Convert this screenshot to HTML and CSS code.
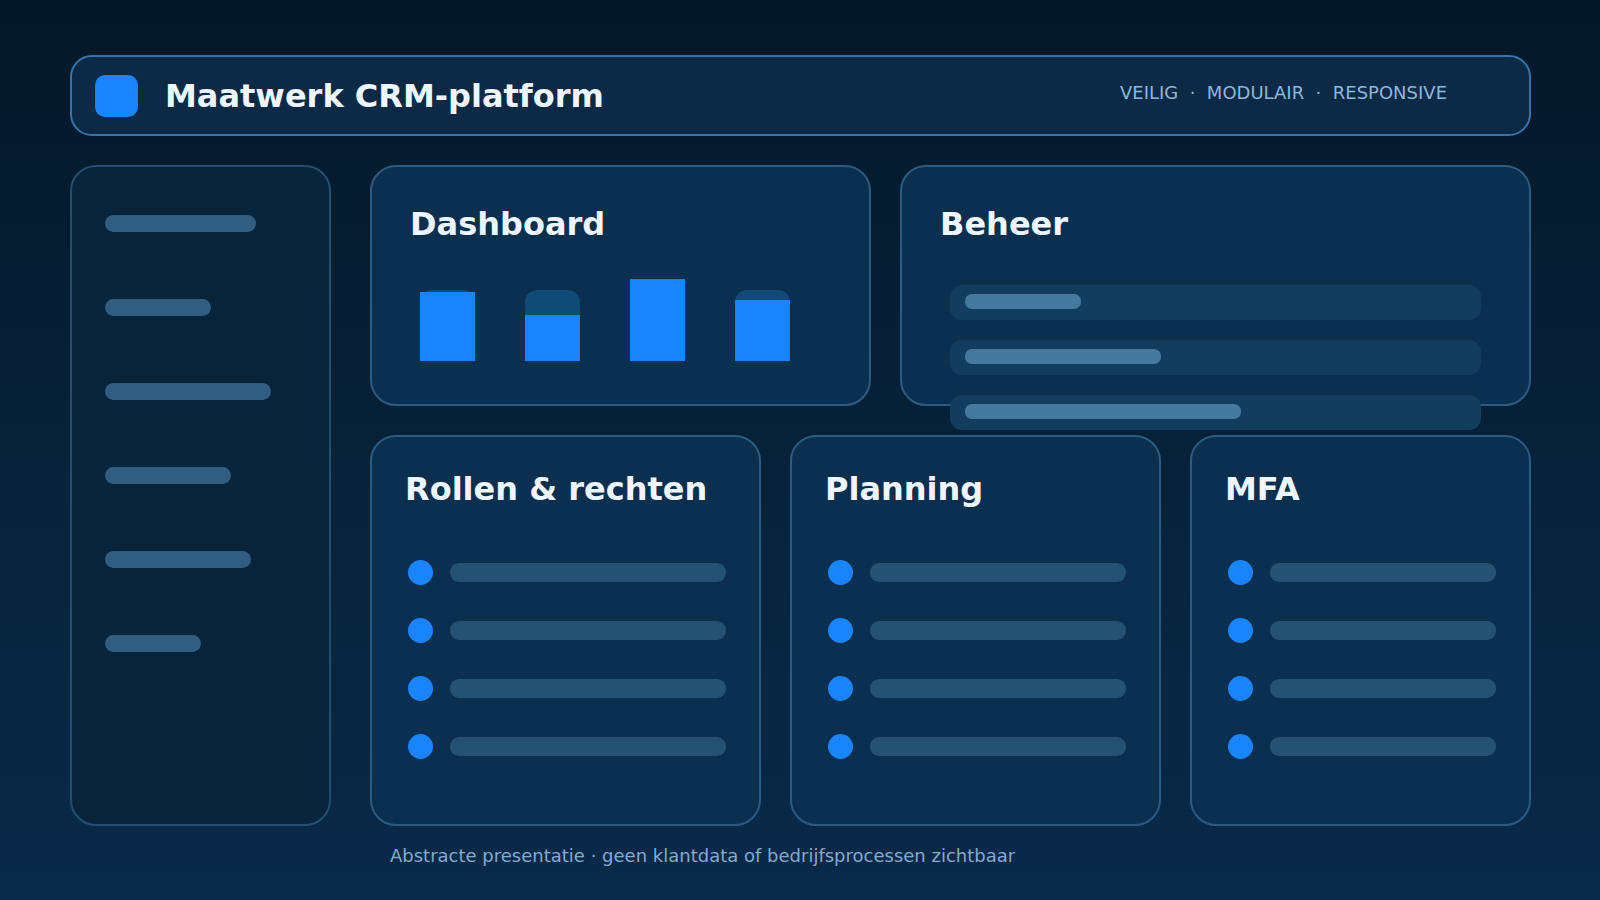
FILE: index.html
```
<!DOCTYPE html>
<html lang="nl">
<head>
    <meta charset="UTF-8">
    <meta name="viewport" content="width=device-width, initial-scale=1.0">
    <title>Maatwerk CRM-platform</title>
    <link rel="stylesheet" href="styles.css">
</head>
<body>
    <!-- Top bar -->
    <header class="topbar">
        <div class="logo"></div>
        <h1>Maatwerk CRM-platform</h1>
        <p class="tagline">VEILIG&nbsp; ·&nbsp; MODULAIR&nbsp; ·&nbsp; RESPONSIVE</p>
    </header>

    <div class="layout">
        <!-- Sidebar with placeholder menu items -->
        <aside class="sidebar">
            <div class="menu-line" style="width: 151px"></div>
            <div class="menu-line" style="width: 106px"></div>
            <div class="menu-line" style="width: 166px"></div>
            <div class="menu-line" style="width: 126px"></div>
            <div class="menu-line" style="width: 146px"></div>
            <div class="menu-line" style="width: 96px"></div>
        </aside>

        <main class="content">
            <div class="row row-top">
                <section class="card">
                    <h2>Dashboard</h2>
                    <div class="chart">
                        <div class="track"><div class="fill" style="height: 69px"></div></div>
                        <div class="track"><div class="fill" style="height: 46px"></div></div>
                        <div class="track"><div class="fill" style="height: 82px"></div></div>
                        <div class="track"><div class="fill" style="height: 61px"></div></div>
                    </div>
                </section>

                <section class="card">
                    <h2>Beheer</h2>
                    <div class="records">
                        <div class="record"><div class="record-line" style="width: 116px"></div></div>
                        <div class="record"><div class="record-line" style="width: 196px"></div></div>
                        <div class="record"><div class="record-line" style="width: 276px"></div></div>
                    </div>
                </section>
            </div>

            <div class="row row-bottom">
                <section class="card">
                    <h2>Rollen &amp; rechten</h2>
                    <ul class="list">
                        <li></li>
                        <li></li>
                        <li></li>
                        <li></li>
                    </ul>
                </section>

                <section class="card">
                    <h2>Planning</h2>
                    <ul class="list">
                        <li></li>
                        <li></li>
                        <li></li>
                        <li></li>
                    </ul>
                </section>

                <section class="card">
                    <h2>MFA</h2>
                    <ul class="list">
                        <li></li>
                        <li></li>
                        <li></li>
                        <li></li>
                    </ul>
                </section>
            </div>
        </main>

        <footer class="note">Abstracte presentatie · geen klantdata of bedrijfsprocessen zichtbaar</footer>
    </div>
</body>
</html>
```
FILE: styles.css
```
* {
    box-sizing: border-box;
}

body {
    margin: 0;
    min-height: 100vh;
    padding: 55px 69px 32px 70px;
    display: flex;
    flex-direction: column;
    gap: 29px;
    background: linear-gradient(#041828, #0a2a4a);
    color: #eef7ff;
    font-family: "DejaVu Sans", Verdana, sans-serif;
    font-size: 18px;
    line-height: 24px;
}

h1, h2 {
    margin: 0;
    font-size: 32px;
    line-height: 40px;
    font-weight: bold;
}

/* Top bar */
.topbar {
    display: flex;
    align-items: center;
    min-height: 81px;
    padding: 0 82px 0 23px;
    background: #0c2a46;
    border: 2px solid #3573a8;
    border-radius: 22px;
}

.logo {
    width: 43px;
    height: 42px;
    margin-right: 27px;
    background: #1885ff;
    border-radius: 10px;
}

.tagline {
    margin: 0 0 0 auto;
    padding-bottom: 6px;
    color: #8cb8d9;
}

/* Sidebar next to the cards, note under the cards */
.layout {
    flex: 1;
    display: grid;
    grid-template-columns: 261px minmax(0, 1fr);
    grid-template-rows: 1fr auto;
    column-gap: 39px;
    row-gap: 18px;
}

.sidebar {
    display: flex;
    flex-direction: column;
    gap: 67px;
    padding: 48px 33px;
    background: #07243b;
    border: 2px solid #214f71;
    border-radius: 26px;
}

.menu-line {
    height: 17px;
    background: #305d80;
    border-radius: 9px;
}

.content {
    display: grid;
    grid-template-rows: 241px 1fr;
    gap: 29px;
}

.row {
    display: grid;
    gap: 29px;
}

.row-top {
    grid-template-columns: 501fr 631fr;
}

.row-bottom {
    grid-template-columns: 391fr 371fr 341fr;
}

.card {
    min-width: 0;
    min-height: 0;
    padding: 37px 38px;
    background: #0b2f4f;
    border: 2px solid #2a5c82;
    border-radius: 26px;
}

.row-bottom .card {
    padding: 32px 33px;
}

/* Dashboard bar chart */
.chart {
    display: flex;
    align-items: flex-end;
    gap: 50px;
    height: 82px;
    margin: 35px 0 0 10px;
}

.track {
    display: flex;
    align-items: flex-end;
    width: 55px;
    height: 71px;
    background: #104b75;
    border-radius: 12px 12px 0 0;
}

.fill {
    flex: 1;
    background: #1885ff;
}

/* Beheer rows, the last one runs over the card edge */
.records {
    display: flex;
    flex-direction: column;
    gap: 20px;
    margin: 41px 10px 0;
}

.record {
    height: 35px;
    padding: 9px 15px;
    background: #133d5e;
    border-radius: 12px;
}

.record-line {
    height: 15px;
    background: #4579a0;
    border-radius: 7px;
}

/* Dot + line lists */
.list {
    display: flex;
    flex-direction: column;
    gap: 33px;
    margin: 51px 0 0;
    padding: 0 0 0 3px;
    list-style: none;
}

.list li {
    display: flex;
    align-items: center;
    gap: 17px;
}

.list li::before {
    content: "";
    width: 25px;
    height: 25px;
    background: #1885ff;
    border-radius: 50%;
}

.list li::after {
    content: "";
    flex: 1;
    height: 19px;
    background: #255273;
    border-radius: 9px;
}

.note {
    grid-column: 2;
    padding-left: 20px;
    color: #80abcc;
}
```
